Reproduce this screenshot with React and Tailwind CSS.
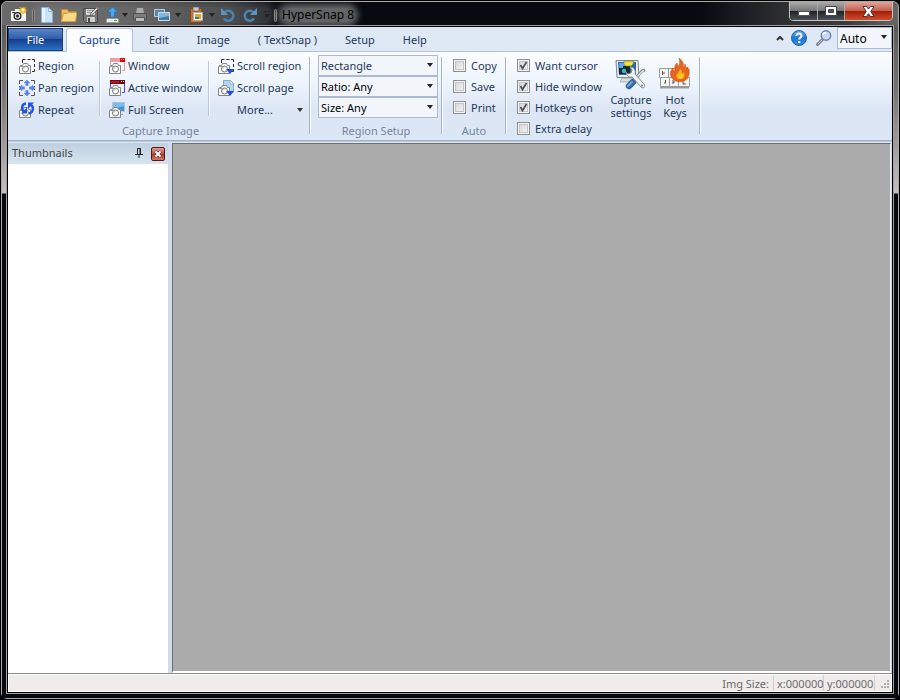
import React from "react";

function Svg({ w = 16, h = 16, children, className = "" }) {
  return (
    <svg width={w} height={h} viewBox={`0 0 ${w} ${h}`} className={`shrink-0 ${className}`} aria-hidden="true">
      {children}
    </svg>
  );
}

function Camera() {
  return (
    <g>
      <path d="M.5 8.500h1v-1h2l1-2h4l1 2h2v8H.5z" fill="#f8f8f8" stroke="#858585" />
      <circle cx="6.500" cy="11" r="3" fill="#fff" stroke="#777" />
      <path d="M5 10.500a2 2 0 0 1 1.500-1.200" fill="none" stroke="#aaa" />
      <path d="M2 8.500h2" stroke="#999" />
    </g>
  );
}

const DashedTop = () => (
  <path d="M3.500 5V1.500h3M8.500 1.500h3M13 1.500h2.500V4M15.500 6v3M15.500 11v2.500H13" fill="none" stroke="#333" />
);

const Icons = {
  region: (
    <Svg><DashedTop /><Camera /></Svg>
  ),
  pan: (
    <Svg>
      <path d="M.5 4V.5H4M12 .5h3.500V4M15.500 12v3.500H12M4 15.500H.5V12M.5 6v1M15.500 6v1M.5 9v1M15.500 9v1" fill="none" stroke="#555" />
      <path d="M8 0l3 3H9.200v2.500H6.800V3H5zM8 16l-3-3h1.800v-2.500h2.400V13H11zM0 8l3-3v1.800h2.500v2.400H3V11zM16 8l-3 3V9.200h-2.500V6.800H13V5z" fill="#5b84f5" stroke="#4a6ee0" strokeWidth=".4" />
    </Svg>
  ),
  repeat: (
    <Svg>
      <Camera />
      <path d="M7 1.500C2.500 2 2 7 5 9.500" fill="none" stroke="#1f55e8" strokeWidth="2.400" />
      <path d="M2 11.500h6V5.500z" fill="#1f55e8" />
      <path d="M10 11.500c4.500-1 5-6.500 2-8.500" fill="none" stroke="#1f55e8" strokeWidth="2.400" />
      <path d="M9 .5h6L9 7z" fill="#1f55e8" />
    </Svg>
  ),
  window: (
    <Svg>
      <path d="M1 0h15v4H1z" fill="#eaa0a0" /><path d="M11 0h5v4h-5z" fill="#e00" />
      <path d="M12 1h1v1h-1zM14 1h1v1h-1z" fill="#fff" />
      <path d="M1.500 4v3M15.500 4v8.500H13" fill="none" stroke="#e49a9a" />
      <Camera />
    </Svg>
  ),
  active: (
    <Svg>
      <path d="M1 0h15v4H1z" fill="#7c0010" /><path d="M12 1h1v1h-1zM14 1h1v1h-1z" fill="#fff" />
      <path d="M2 2h8" stroke="#d33" />
      <path d="M1.500 4v4M15.500 4v8.500H13" fill="none" stroke="#5a46e8" />
      <Camera />
    </Svg>
  ),
  full: (
    <Svg>
      <path d="M3.500.5h12v9h-12z" fill="#3f95dc" stroke="#b3c4d6" />
      <path d="M4 1h11v3L4 7z" fill="#78bdf0" /><path d="M9 10h3v2h2v1H9z" fill="#97a3b3" />
      <Camera />
    </Svg>
  ),
  scrollRegion: (
    <Svg><DashedTop /><Camera /><path d="M8 11h8l-4 5z" fill="#1f4cf0" /></Svg>
  ),
  scrollPage: (
    <Svg>
      <path d="M5.500.5h7l3 3v9h-10z" fill="#b5d7f2" stroke="#83aacb" /><path d="M12 1v3h3" fill="#fff" stroke="#93b5d1" />
      <Camera /><path d="M8 11h8l-4 5z" fill="#1f4cf0" />
    </Svg>
  ),
};

function Down({ color = "#333" }) {
  return <Svg w={6} h={4}><path d="M0 0h6L3 4z" fill={color} /></Svg>;
}

function TitleButton({ label, children, className = "" }) {
  return <button aria-label={label} className={`flex h-4 shrink-0 items-center justify-center ${className}`}>{children}</button>;
}

function Divider({ className = "" }) {
  return <div className={`h-[13px] w-[3px] shrink-0 rounded-sm border border-[#8a8a8a] bg-[#444] ${className}`} />;
}

function TitleBar() {
  return (
    <header className="flex h-[23px] items-start overflow-hidden rounded-t-[5px]">
      <div className="flex min-w-0 flex-1 items-center pt-[5px]">
        <TitleButton label="System menu" className="ml-[9px] w-4">
          <Svg>
            <path d="M0 4h4V2h5v2h6v10H0z" fill="#f4f4f4" /><path d="M1 5h3v1H1z" fill="#444" />
            <circle cx="6.500" cy="9" r="4" fill="#222" /><circle cx="6.500" cy="9" r="2.700" fill="#ddd" />
            <circle cx="6.500" cy="9" r="1.500" fill="#222" />
            <path d="M8 0l3 1 1-1 1 1 2-1-1 2 2 1-2 1 1 2-2-.5L12 7l-1-2-2 1 1-2-2-1 2-1z" fill="#ffd43b" stroke="#d59000" strokeWidth=".5" />
            <path d="M11 2h2v2h-2z" fill="#fff" />
          </Svg>
        </TitleButton>
        <Divider className="ml-[5px]" />
        <div className="flex h-4 shrink-0 items-center rounded-[6px] bg-[#a0a0a0]/20 shadow-[0_0_6px_3px_rgb(160_160_160/0.2)]">
          <TitleButton label="New" className="ml-[4px] w-4">
            <Svg><path d="M2.500.5h7l4 4v11h-11z" fill="#c6e3f8" stroke="#83b4da" /><path d="M9.500.5v4h4z" fill="#fff" stroke="#83b4da" /><path d="M3 1h3v14H3z" fill="#e3f2fc" /></Svg>
          </TitleButton>
          <TitleButton label="Open" className="ml-[6px] w-4">
            <Svg><path d="M.5 13.500v-11h6l1 2h7v3" fill="#e8bd62" stroke="#c3862b" /><path d="M.5 14.500l2-8h4l1-1h8v3l-1 6z" fill="#f9d98a" stroke="#d49d3e" /></Svg>
          </TitleButton>
          <TitleButton label="Save" className="ml-[6px] w-4">
            <Svg><path d="M.5 1.500h14v14H2.500l-2-2z" fill="#777" stroke="#484848" /><path d="M3 2h9v6H3z" fill="#d8d8d8" /><path d="M4 3.500h7M4 5.500h5" stroke="#999" /><path d="M4 10h8v5H4z" fill="#cfcfcf" /><path d="M5 11h2v4H5z" fill="#444" /><path d="M7 9l1-3 6-6 2 1-6 6z" fill="#ddd" stroke="#444" strokeWidth=".7" /><path d="M14 0l2 1-1 1.500-2-1z" fill="#c77" /></Svg>
          </TitleButton>
          <TitleButton label="Upload" className="ml-[6px] w-4">
            <Svg><path d="M1.500 12.500l1-1h10l1 1v3h-12z" fill="#e8eee8" stroke="#999" /><path d="M9 13h3v1H9z" fill="#3a3" /><path d="M7.500 0l5 5h-3v5h-4V5h-3z" fill="#48a6ef" stroke="#1c73bd" strokeWidth=".7" /></Svg>
          </TitleButton>
          <TitleButton label="Upload options" className="w-2"><Down color="#222" /></TitleButton>
          <TitleButton label="Print" className="ml-[3px] w-4">
            <Svg><path d="M4.500.5h7l1 6h-9z" fill="#aaa" stroke="#666" /><path d="M1.500 6.500h13v6h-13z" fill="#7d7d7d" stroke="#505050" /><path d="M3.500 10.500h9v4h-9z" fill="#bbb" stroke="#555" /></Svg>
          </TitleButton>
          <TitleButton label="Images" className="ml-[6px] w-4">
            <Svg><path d="M.5 2.500h10v7H.5z" fill="#5988af" stroke="#bac8d4" /><path d="M4.500 5.500h11v8h-11z" fill="#3d7cb1" stroke="#d0dae2" /><path d="M5 6h10v3L5 11z" fill="#83b5dd" /></Svg>
          </TitleButton>
          <TitleButton label="Image list" className="ml-[4px] w-2"><Down color="#222" /></TitleButton>
          <TitleButton label="Paste" className="ml-[6px] w-4">
            <Svg><path d="M2.500 1.500h11v14h-11z" fill="#c77331" stroke="#8a4518" /><path d="M5 0h6v4H5z" fill="#c8c8c8" stroke="#555" strokeWidth=".6" /><path d="M5.500 5.500h9v8h-9z" fill="#fff" stroke="#aaa" /><path d="M7 7h6v5H7z" fill="#e6a91d" /><path d="M7 10h4v2H7z" fill="#3278b5" /></Svg>
          </TitleButton>
          <TitleButton label="Paste options" className="ml-[4px] w-2"><Down color="#222" /></TitleButton>
          <TitleButton label="Undo" className="ml-[4px] w-4">
            <Svg><path d="M4.500 5.500a5 5 0 1 1-.5 6" fill="none" stroke="#4a83ac" strokeWidth="2.500" /><path d="M1 1v7h7z" fill="#5b95bf" /></Svg>
          </TitleButton>
          <TitleButton label="Redo" className="ml-[6px] w-4">
            <Svg><path d="M11.500 5.500a5 5 0 1 0 .5 6" fill="none" stroke="#4a83ac" strokeWidth="2.500" /><path d="M15 1v7H8z" fill="#5b95bf" /></Svg>
          </TitleButton>
          <TitleButton label="Customize toolbar" className="ml-[5px] w-2">
            <Svg w={6} h={8}><path d="M0 0h6v1H0zM0 3h6L3 7z" fill="#222" /></Svg>
          </TitleButton>
        </div>
        <Divider className="ml-[3px]" />
        <h1 className="ml-[5px] h-[14px] whitespace-nowrap rounded-[7px] bg-[#8a8a8a]/70 text-[12px] leading-[14px] text-black shadow-[0_0_6px_4px_rgb(138_138_138/0.7)]">HyperSnap 8</h1>
      </div>
      <div className="-mt-px mr-[5px] flex h-[20px] shrink-0 overflow-hidden rounded-b-[4px] border border-[#c4c4c4]">
        <button aria-label="Minimize" className="flex w-[28px] items-center justify-center border-r border-[#aaa] bg-[linear-gradient(#aaa_0%,#777_48%,#1d2024_50%,#4d5156_100%)] pt-[4px]">
          <Svg w={12} h={6}><path d="M.5 1.500h11v4H.5z" fill="#fff" stroke="#555" /></Svg>
        </button>
        <button aria-label="Maximize" className="flex w-[27px] items-center justify-center border-r border-[#aaa] bg-[linear-gradient(#aaa_0%,#777_48%,#1d2024_50%,#4d5156_100%)]">
          <Svg w={12} h={10}><path d="M.5.5h11v9H.5z" fill="#fff" stroke="#444" /><path d="M3.500 3.500h5v3h-5z" fill="#555" stroke="#444" /></Svg>
        </button>
        <button aria-label="Close" className="flex w-[47px] items-center justify-center bg-[linear-gradient(#dfa599_0%,#c4604e_48%,#a11c08_50%,#d04d2a_100%)]">
          <Svg w={13} h={11}><path d="M1 .5h3.500l2 2.500 2-2.500H12L8.800 5.500l3.200 5H8.500l-2-2.800-2 2.800H1l3.200-5z" fill="#fff" stroke="#44333a" /></Svg>
        </button>
      </div>
    </header>
  );
}

function Tabs() {
  return (
    <nav className="flex h-[25px] items-stretch border-b border-[#b2c3da] bg-[#dfe8f5] pt-px text-[11px] text-[#1e395b]">
      <button className="w-[55px] border border-[#20407c] bg-[linear-gradient(#5b86c7_0%,#2c5ba9_48%,#153e8c_50%,#2a71c4_100%)] pt-[2px] text-white">File</button>
      <button className="-mb-px ml-[3px] w-[67px] rounded-t-[3px] border border-b-0 border-[#b2c3da] bg-[#fafcff] text-[#15428b]">Capture</button>
      <div className="ml-[2px] flex">
        {["Edit", "Image", "( TextSnap )", "Setup", "Help"].map((t) => (
          <button key={t} className="whitespace-nowrap px-[14px] pt-[2px]">{t}</button>
        ))}
      </div>
      <div className="-mt-px ml-auto flex h-[22px] items-center">
        <button aria-label="Collapse ribbon" className="mr-[7px]">
          <Svg w={8} h={6}><path d="M1 5l3-3 3 3" fill="none" stroke="#333" strokeWidth="2" /></Svg>
        </button>
        <button aria-label="Help contents" className="mr-[9px]">
          <Svg>
            <defs><linearGradient id="help" x2="0" y2="1"><stop stopColor="#65aaf0" /><stop offset=".5" stopColor="#2474d2" /><stop offset="1" stopColor="#2a8ce4" /></linearGradient></defs>
            <circle cx="8" cy="8" r="7.500" fill="url(#help)" stroke="#2167b5" />
            <path d="M5.500 6c0-3.500 5.500-3.200 5 0-.3 1.500-2.300 1.500-2.300 3.500" fill="none" stroke="#fff" strokeWidth="2" /><path d="M7 11h2.300v2H7z" fill="#fff" />
          </Svg>
        </button>
        <button aria-label="Zoom" className="mr-[5px]">
          <Svg>
            <path d="M1.500 14.500l5-5" stroke="#777d86" strokeWidth="3" strokeLinecap="round" /><path d="M1.500 14.500l5-5" stroke="#c6ccd5" />
            <circle cx="10" cy="5.500" r="4.700" fill="#c7d9ef" stroke="#7080b5" strokeWidth="1.500" /><path d="M7 5a3 3 0 0 1 3-2.500" fill="none" stroke="#fff" strokeWidth="1.500" />
          </Svg>
        </button>
        <Combo label="Zoom level" value="Auto" className="h-[22px] w-[55px] text-[12px] text-black" />
      </div>
    </nav>
  );
}

function Combo({ label, value, className }) {
  return (
    <div className={`relative shrink-0 border border-[#abbad0] bg-[#f2f6fb] ${className}`}>
      <select aria-label={label} defaultValue={value} className="block h-full w-full appearance-none bg-transparent pl-[2px] pr-3 pt-px outline-none">
        <option>{value}</option>
      </select>
      <span className="pointer-events-none absolute inset-y-0 right-[4px] flex items-center pb-[2px]"><Down color="#222" /></span>
    </div>
  );
}

function Command({ icon, text }) {
  return (
    <button className="flex h-[22px] items-center gap-[3px] whitespace-nowrap">
      {icon}
      <span>{text}</span>
    </button>
  );
}

function Check({ text, on = false }) {
  return (
    <label className="flex h-[21px] items-center gap-[5px] whitespace-nowrap">
      <span className="grid size-[13px] shrink-0">
        <input type="checkbox" defaultChecked={on} className="peer col-start-1 row-start-1 size-[13px] appearance-none border border-[#8e8f8f] bg-[linear-gradient(135deg,#cfd1d4,#f8f8f8)] shadow-[inset_0_0_0_1px_#f4f4f4,inset_0_0_0_2px_#c3c5c9]" />
        <svg width="13" height="13" viewBox="0 0 13 13" className="pointer-events-none invisible col-start-1 row-start-1 peer-checked:visible" aria-hidden="true">
          <path d="M3.500 6l2 3.500L9.500 3" fill="none" stroke="#4b4f57" strokeWidth="1.700" />
        </svg>
      </span>
      <span className="pt-[2px]">{text}</span>
    </label>
  );
}

const Rule = () => <div className="mt-[6px] h-[55px] w-[2px] shrink-0 border-l border-[#b9c8dc] bg-white/70" />;
const GroupRule = () => <div className="mt-[2px] h-[77px] w-[2px] shrink-0 border-l border-[#a3b6cf] bg-white/80" />;
const Caption = ({ children, className = "" }) => (
  <div className={`mt-auto h-[16px] text-center leading-4 text-[#76849b] ${className}`}>{children}</div>
);

function CaptureSettingsIcon() {
  return (
    <Svg w={32} h={32}>
      <path d="M1 2.500h22l1 17H2z" fill="#eceeef" stroke="#7b858c" /><path d="M3 4h18v13H4z" fill="#2468b8" /><path d="M4 5h12l-8 11H5z" fill="#64a8e6" />
      <path d="M7 20h10l2 4H5z" fill="#d8dbde" stroke="#9aa1a7" strokeWidth=".7" />
      <path d="M4 10h4V8h7v8H4z" fill="#17272f" /><circle cx="9" cy="13" r="2.300" fill="#3fb5b5" />
      <path d="M9 3l3 1 2-1 2 1 3-1-1 3-2 2h-5l-2-2z" fill="#f0e437" stroke="#918b00" strokeWidth=".6" />
      <path d="M30 12l-3 1-9 10" fill="none" stroke="#7b8894" strokeWidth="3" /><path d="M29 12.500l-2 1-9 10" fill="none" stroke="#dfe4e8" strokeWidth="1.500" />
      <path d="M18 24l-4 4" stroke="#3465a4" strokeWidth="6.500" strokeLinecap="round" /><path d="M17 24l-4 4" stroke="#7fa5d3" strokeWidth="2" strokeLinecap="round" />
      <path d="M15 9l2 3-1 3-3 1-2-2c0 3 3 6 6 5l9 10c2 2 5 0 3-3L20 16c1-4-1-7-5-7z" fill="#f1f3f2" stroke="#858c8a" />
      <circle cx="27" cy="27.500" r="1" fill="#777" />
    </Svg>
  );
}

function HotKeysIcon() {
  return (
    <Svg w={32} h={32}>
      <path d="M1 29.500h29" stroke="#9a9a9a" strokeWidth="2" />
      <g fill="#f5f5f4" stroke="#9b9b9b"><path d="M.5 10.500h9v9h-9zM9.500 10.500h9v9h-9zM1.500 19.500h9v9h-9zM10.500 19.500h9v9h-9zM19.500 19.500h11v9h-11z" /></g>
      <path d="M3.500 13v4M4 15h2M6.500 22v3H5M14 22v4M14 24h2M24 22v4h3" stroke="#555" fill="none" />
      <path d="M15 22c-5-4-4-9-1-12 0 2 1 3 2 3-1-4 0-6 2-8 0 2 1 3 2 3 1-3 1-5 0-8 4 3 5 6 4 9 1 0 2-1 2-3l1 4 2-1v3l1-1c1 6-1 10-5 12-3 1-8 1-10-1z" fill="#e9641c" stroke="#c84b12" strokeWidth=".6" />
      <path d="M18 20c-2-4 2-4 3-9 3 3 1 4 3 5l1-2c1 4 0 7-3 7-2 0-3 0-4-1z" fill="#ffc21f" />
    </Svg>
  );
}

function BigButton({ icon, lines, className }) {
  return (
    <button className={`flex flex-col items-center whitespace-nowrap leading-[13px] ${className}`}>
      {icon}
      <span className="mt-[3px]">{lines[0]}<br />{lines[1]}</span>
    </button>
  );
}

function Ribbon() {
  return (
    <section aria-label="Capture" className="flex h-[88px] shrink-0 overflow-hidden bg-[linear-gradient(#fafcff_0%,#edf4fc_35%,#dce6f4_65%,#dce7f5_100%)] pt-[3px] text-[11px] text-[#1e395b]">
      <div className="flex h-[84px] w-[301px] shrink-0 flex-col">
        <div className="flex">
          <div className="w-[91px] pl-[11px]">
            <Command icon={Icons.region} text="Region" />
            <Command icon={Icons.pan} text="Pan region" />
            <Command icon={Icons.repeat} text="Repeat" />
          </div>
          <Rule />
          <div className="w-[107px] pl-[8px]">
            <Command icon={Icons.window} text="Window" />
            <Command icon={Icons.active} text="Active window" />
            <Command icon={Icons.full} text="Full Screen" />
          </div>
          <Rule />
          <div className="w-[99px] pl-[8px]">
            <Command icon={Icons.scrollRegion} text="Scroll region" />
            <Command icon={Icons.scrollPage} text="Scroll page" />
            <button className="flex h-[22px] w-full items-center justify-between pl-[19px] pr-[6px]">More... <Down /></button>
          </div>
        </div>
        <Caption className="pl-[4px]">Capture Image</Caption>
      </div>
      <GroupRule />
      <div className="flex h-[84px] w-[130px] shrink-0 flex-col px-[5px]">
        <div className="flex flex-col pl-[2px]">
          <Combo label="Region shape" value="Rectangle" className="h-[21px] w-[120px]" />
          <Combo label="Ratio" value="Ratio: Any" className="h-[21px] w-[120px] text-black" />
          <Combo label="Size" value="Size: Any" className="h-[21px] w-[120px] text-black" />
        </div>
        <Caption>Region Setup</Caption>
      </div>
      <GroupRule />
      <div className="flex h-[84px] w-[62px] shrink-0 flex-col">
        <div className="pl-[10px]">
          <Check text="Copy" />
          <Check text="Save" />
          <Check text="Print" />
        </div>
        <Caption>Auto</Caption>
      </div>
      <GroupRule />
      <div className="flex h-[84px] w-[192px] shrink-0">
        <div className="w-[100px] pl-[10px]">
          <Check text="Want cursor" on />
          <Check text="Hide window" on />
          <Check text="Hotkeys on" on />
          <Check text="Extra delay" />
        </div>
        <BigButton icon={<CaptureSettingsIcon />} lines={["Capture", "settings"]} className="h-[68px] w-[48px] pt-[3px]" />
        <BigButton icon={<HotKeysIcon />} lines={["Hot", "Keys"]} className="h-[68px] w-[40px] pt-[3px]" />
      </div>
      <GroupRule />
    </section>
  );
}

function StatusBar() {
  return (
    <footer className="flex h-[19px] shrink-0 items-center justify-end border-t border-[#8c8c8c] bg-[#f0ecec] text-[11px] text-[#6b6b6b] shadow-[inset_1px_1px_0_#fff,inset_-1px_-1px_0_#fff]">
      <span className="h-[16px] border-r border-[#d2cdcd] pr-[4px] leading-[18px]">Img Size:</span>
      <span className="h-[16px] w-[50px] whitespace-nowrap border-r border-[#d2cdcd] pl-[3px] leading-[18px]">x:000000</span>
      <span className="h-[16px] w-[51px] whitespace-nowrap border-r border-[#d2cdcd] pl-[3px] leading-[18px]">y:000000</span>
      <Svg w={17} h={16}>
        <g fill="#b5b0b0"><path d="M12 5h2v2h-2zM9 8h2v2H9zM12 8h2v2h-2zM6 11h2v2H6zM9 11h2v2H9zM12 11h2v2h-2z" /></g>
      </Svg>
    </footer>
  );
}

export default function App() {
  return (
    <div className="h-screen bg-black p-px font-['Noto_Sans','Open_Sans',sans-serif]">
      <div className="flex h-full flex-col rounded-[6px] border border-[#aaa] bg-[#070b11] bg-[linear-gradient(90deg,#6a6a6a_0,#585858_130px,#3a3b3d_225px,#070b11_285px,#070b11_78%,#303234_88%,#3a3a3a_94%,#666_100%)] bg-[length:100%_23px] bg-no-repeat">
        <TitleBar />
        <div className="flex min-h-0 flex-1 flex-col bg-[linear-gradient(#5b5b5b_0,#757070_60px,#c4bebe_168px,#070b11_169px)] px-[4px] pb-[4px]">
          <main className="flex min-h-0 flex-1 flex-col border border-[#a0a0a0] bg-black p-px">
            <Tabs />
            <Ribbon />
            <div className="h-[3px] shrink-0 border-y border-b-[#dbe5f2] border-t-[#9fb2cd] bg-[#bccbe0]" />
            <div className="flex min-h-0 flex-1 bg-[#d2d9ec]">
              <aside className="flex w-[160px] shrink-0 flex-col">
                <div className="flex h-[21px] items-center bg-[linear-gradient(#bfcfdd,#d6e4f1)] pl-[4px] pr-[3px] text-[11px] text-[#444]">
                  <h2 className="flex-1">Thumbnails</h2>
                  <button aria-label="Pin panel" className="mr-[8px] pb-[2px]">
                    <Svg w={8} h={10}><path d="M2.500 6V.5h3V6M5 0v6M0 6.500h8M4 7v3" fill="none" stroke="#222" /></Svg>
                  </button>
                  <button aria-label="Close panel" className="flex h-[14px] w-[14px] items-center justify-center rounded-[2px] border border-[#541a1a] bg-[linear-gradient(#dda094,#c0493a_50%,#ad3224_52%,#d57b65)]">
                    <Svg w={8} h={8}><path d="M1.500 1.500l5 5M6.500 1.500l-5 5" stroke="#503040" strokeWidth="3" /><path d="M1.500 1.500l5 5M6.500 1.500l-5 5" stroke="#fff" strokeWidth="1.800" /></Svg>
                  </button>
                </div>
                <div className="flex-1 bg-white" />
              </aside>
              <div className="ml-[4px] mr-px flex-1 border border-b-2 border-b-white border-l-[#716f6c] border-r-[#f0eeea] border-t-[#716f6c] bg-[#ababab]" />
            </div>
            <StatusBar />
          </main>
        </div>
      </div>
    </div>
  );
}
